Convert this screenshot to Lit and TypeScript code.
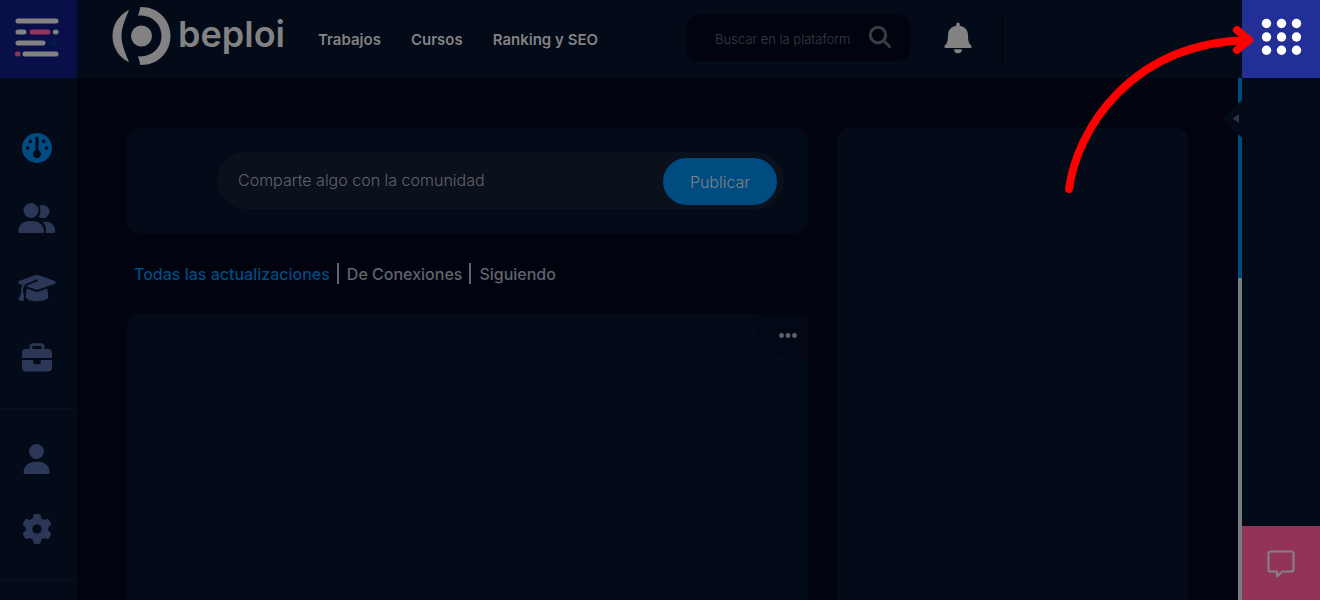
import { LitElement, html, css, svg } from "lit";
import { customElement, state } from "lit/decorators.js";

const icon = (w: number, h: number, box: string, body: unknown) => html`
  <svg width=${w} height=${h} viewBox=${box} fill="currentColor" aria-hidden="true">${body}</svg>`;

const gauge = icon(30, 30, "0 0 30 30", svg`
  <path fill-rule="evenodd" d="M15 0a15 15 0 1 0 0 30a15 15 0 0 0 0-30zM13.6 5.2a1.4 1.4 0 0 1 2.8 0V17.3a4 4 0 1 1-2.8 0zM8.3 6.6a1.8 1.8 0 1 1 0 3.6a1.8 1.8 0 0 1 0-3.6zM21.7 6.6a1.8 1.8 0 1 1 0 3.6a1.8 1.8 0 0 1 0-3.6zM5.6 13.2a1.8 1.8 0 1 1 0 3.6a1.8 1.8 0 0 1 0-3.6zM24.4 13.2a1.8 1.8 0 1 1 0 3.6a1.8 1.8 0 0 1 0-3.6z"/>`);

const people = icon(38, 30, "0 0 38 30", svg`
  <circle cx="13" cy="7.5" r="7.5"/>
  <path d="M0.3 28.5C0.3 22 5.5 18 11.3 18h3.4c5.800 0 11.300 4 11.300 10.500q0 1.500-1.500 1.500H1.800q-1.500 0-1.500-1.500z"/>
  <path d="M21.300 3.100a6.600 6.600 0 1 1-.5 10.800c2-3.300 2.200-7.300.5-10.800z"/>
  <path d="M24.200 18.800h4.500c4.800 0 8.500 4.200 8.500 9.700q0 1.500-1.500 1.500h-7.900c1-4.500-.5-8.700-3.600-11.200z"/>`);

const cap = icon(38, 30, "0 0 640 512", svg`
  <path d="M320 32c-8.1 0-16.1 1.4-23.7 4.1L15.800 137.400C6.300 140.900 0 149.900 0 160s6.300 19.100 15.800 22.600l57.900 20.900C57.300 229.300 48 259.800 48 291.900v28.100c0 28.400-10.800 57.700-22.300 80.800c-6.500 13-13.900 25.800-22.500 37.600C0 442.700-.9 448.300 .9 453.400s6 8.900 11.200 10.200l64 16c4.200 1.100 8.700 .3 12.400-2s6.300-6.100 7.100-10.400c8.600-42.800 4.300-81.200-2.100-108.700C90.300 344.300 86 329.800 80 316.500V291.900c0-30.200 10.200-58.700 27.900-81.500c12.900-15.500 29.600-28 49.200-35.700l157-61.700c8.200-3.200 17.500 .8 20.700 9s-.8 17.500-9 20.700l-157 61.700c-12.400 4.900-23.300 12.400-32.200 21.600l159.600 57.600c7.600 2.700 15.600 4.100 23.700 4.100s16.100-1.400 23.700-4.100L624.200 182.600c9.500-3.400 15.800-12.500 15.800-22.600s-6.300-19.100-15.800-22.600L343.700 36.100C336.100 33.400 328.100 32 320 32zM128 408c0 35.300 86 72 192 72s192-36.700 192-72L496.700 262.600 354.500 314c-11.100 4-22.800 6-34.500 6s-23.500-2-34.500-6L143.300 262.600 128 408z"/>`);

const briefcase = icon(30, 30, "0 1 30 30", svg`
  <path fill-rule="evenodd" d="M7.500 7V4.500A3.300 3.300 0 0 1 10.800 1.200h8.400a3.300 3.300 0 0 1 3.300 3.300V7H26a4 4 0 0 1 4 4v5H0v-5a4 4 0 0 1 4-4zM10.300 7h9.400V4.600a.6.6 0 0 0-.6-.6h-8.200a.6.6 0 0 0-.6.600z"/>
  <path d="M0 18h11.200v2.200a2 2 0 0 0 2 2h3.600a2 2 0 0 0 2-2V18H30v7.500a4 4 0 0 1-4 4H4a4 4 0 0 1-4-4z"/>`);

const person = icon(28, 30, "0 0 28 30", svg`
  <circle cx="13.500" cy="7.500" r="7.500"/>
  <path d="M.5 28.500C.5 22 6 17.800 12 17.800h3.500c6 0 11.200 4.200 11.200 10.700q0 1.500-1.500 1.500H2q-1.500 0-1.500-1.500z"/>`);

const gear = icon(30, 30, "0 0 512 512", svg`
  <path d="M495.900 166.600c3.200 8.700 .5 18.400-6.400 24.600l-43.300 39.400c1.100 8.300 1.700 16.800 1.700 25.400s-.6 17.100-1.700 25.400l43.300 39.400c6.900 6.200 9.600 15.900 6.400 24.600c-4.400 11.900-9.700 23.300-15.800 34.300l-4.700 8.100c-6.600 11-14 21.400-22.100 31.200c-5.900 7.200-15.700 9.600-24.500 6.800l-55.700-17.700c-13.400 10.300-28.200 18.900-44 25.400l-12.500 57.100c-2 9.100-9 16.300-18.200 17.800c-13.800 2.300-28 3.500-42.500 3.500s-28.700-1.200-42.500-3.500c-9.200-1.500-16.200-8.700-18.200-17.800l-12.500-57.100c-15.800-6.500-30.600-15.100-44-25.400L83.100 425.900c-8.800 2.800-18.600 .3-24.500-6.800c-8.100-9.800-15.500-20.200-22.100-31.200l-4.700-8.100c-6.100-11-11.400-22.400-15.800-34.300c-3.200-8.700-.5-18.400 6.400-24.600l43.300-39.400C64.600 273.100 64 264.600 64 256s.6-17.100 1.700-25.400L22.400 191.200c-6.900-6.200-9.600-15.900-6.400-24.600c4.400-11.900 9.700-23.300 15.800-34.300l4.700-8.100c6.600-11 14-21.400 22.100-31.200c5.900-7.200 15.700-9.600 24.500-6.800l55.700 17.700c13.400-10.300 28.200-18.900 44-25.400l12.500-57.100c2-9.100 9-16.300 18.200-17.800C227.300 1.200 241.500 0 256 0s28.700 1.200 42.500 3.500c9.200 1.500 16.200 8.700 18.200 17.800l12.500 57.100c15.800 6.500 30.600 15.100 44 25.400l55.700-17.700c8.800-2.800 18.600-.3 24.500 6.800c8.100 9.800 15.500 20.200 22.100 31.200l4.700 8.100c6.100 11 11.400 22.400 15.800 34.300zM256 336a80 80 0 1 0 0-160 80 80 0 1 0 0 160z"/>`);

@customElement("app-root")
export class AppRoot extends LitElement {
  @state() private tab = 0;

  static styles = css`
    :host {
      display: block;
      font-family: Inter, "Liberation Sans", sans-serif;
      --panel: #030a18;
      --ground: #01030f;
      --text: #828282;
      --blue: #004b80;
      --muted: #2c3757;
      color: var(--text);
    }
    * { box-sizing: border-box; }
    svg { display: block; flex: none; }
    a { color: inherit; text-decoration: none; }
    button { border: 0; padding: 0; margin: 0; background: none; color: inherit; font: inherit; cursor: pointer; }
    .shell {
      display: grid;
      grid-template-columns: 77px minmax(0, 1fr) 78px;
      height: 100vh;
      overflow: hidden;
      background: var(--ground);
      position: relative;
    }
    .side, .rail { background: var(--panel); display: flex; flex-direction: column; min-height: 0; }
    .toggle { height: 78px; flex: none; background: #091049; display: grid; place-items: center; padding: 0 3px 3px 0; }
    .group { display: flex; flex-direction: column; flex: none; padding: 15px 0; border-bottom: 1px solid #09101f; }
    .group.first { padding-top: 35px; }
    .group a { height: 70px; display: grid; place-items: center; padding-right: 4px; color: var(--muted); }
    .group a.on { color: var(--blue); }
    .center { display: flex; flex-direction: column; min-width: 0; min-height: 0; }
    .top {
      height: 78px; flex: none; background: var(--panel);
      display: grid; align-items: center; padding: 0 0 2px 35px;
      grid-template-columns: 206px 368px 224px auto 1fr;
    }
    .brand { display: flex; align-items: center; gap: 7px; height: 76px; padding-bottom: 4px; }
    .word { font-size: 36px; line-height: 40px; font-weight: 600; padding-bottom: 4px; }
    .links { display: flex; gap: 30px; font-size: 15px; line-height: 20px; font-weight: 600; padding-top: 4px; white-space: nowrap; }
    .search { display: flex; align-items: center; height: 46px; border-radius: 12px; background: var(--ground); padding: 0 18px 0 29px; }
    .search input {
      flex: 1; min-width: 0; border: 0; padding: 2px 0 0; background: none; outline: 0;
      color: #393c42; font: 300 13px/20px Inter, sans-serif;
    }
    .search input::placeholder { color: #393c42; opacity: 1; }
    .search button { color: #393c42; padding-bottom: 2px; }
    .alerts { height: 50px; padding: 0 30px 0 34px; border-right: 1px solid #000107; display: grid; place-items: center; }
    .stage { flex: 1; min-height: 0; display: grid; grid-template-columns: minmax(0, 1fr) 4px; }
    .page { padding: 50px 50px 0; display: grid; grid-template-columns: minmax(0, 1fr) 351px; gap: 29px; min-height: 0; }
    .feed { display: flex; flex-direction: column; min-width: 0; min-height: 0; }
    .card { background: var(--panel); border-radius: 12px; }
    .open { border-radius: 12px 12px 0 0; }
    .composer { padding: 24px 24px 24px 90px; }
    .pill {
      display: flex; align-items: flex-end; height: 57px; border-radius: 29px;
      background: #0a101c; border: 1px solid #0c121d; padding: 0 6px 3px 20px;
    }
    .pill input {
      flex: 1; min-width: 0; height: 47px; border: 0; padding: 0 0 4px; outline: 0; background: none;
      color: #60646d; font: 300 16px/24px Inter, sans-serif;
    }
    .pill input::placeholder { color: #60646d; opacity: 1; }
    .send { width: 114px; height: 47px; border-radius: 24px; background: var(--blue); font-size: 16px; font-weight: 300; }
    .tabs { display: flex; align-items: center; height: 81px; flex: none; padding-left: 7px; color: #60646d; }
    .tabs button { font-size: 16px; line-height: 19px; padding-top: 2px; font-weight: 500; white-space: nowrap; }
    .tabs button + button { border-left: 2px solid #60646d; margin-left: 7px; padding-left: 8px; }
    .tabs .on { color: var(--blue); }
    .post { flex: 1; min-height: 0; display: flex; justify-content: flex-end; align-items: flex-start; border-radius: 12px 0 0 0; }
    .more {
      width: 55px; height: 47px; border-radius: 0 0 0 47px; background: #020815;
      color: #60646d; display: flex; justify-content: flex-end; padding: 18px 10px 0 0;
    }
    .track { background: #777d7e; }
    .thumb { height: 200px; background: var(--blue); }
    .rail { position: relative; }
    .apps { height: 78px; flex: none; background: #212f96; color: #fff; display: grid; place-items: center; }
    .nub { position: absolute; top: 100px; left: -20px; color: #2f3440; }
    .chat { height: 74px; margin-top: auto; background: #92335a; display: grid; place-items: center; padding-top: 2px; color: #828282; }
    .pointer { position: absolute; top: 0; right: 60px; pointer-events: none; }
  `;

  render() {
    const tabs = ["Todas las actualizaciones", "De Conexiones", "Siguiendo"];
    const main: [string, unknown][] = [["Inicio", gauge], ["Comunidad", people], ["Cursos", cap], ["Trabajos", briefcase]];
    const own: [string, unknown][] = [["Perfil", person], ["Ajustes", gear]];
    return html`
      <div class="shell">
        <aside class="side">
          <button class="toggle" aria-label="Menú">
            <svg width="44" height="40" viewBox="0 0 44 40" fill="none" stroke="#828282" stroke-width="5" stroke-linecap="round">
              <path d="M3 3H41M3 14H9M40.500 14H41M3 25H28M10 36H41"/>
              <path stroke="#92335a" d="M17 14H33M2.500 36H3"/>
              <path stroke="#031b47" d="M37 25H40"/>
            </svg>
          </button>
          <nav class="group first">
            ${main.map(([name, glyph], i) => html`<a href="#" class=${i === 0 ? "on" : ""} aria-label=${name}>${glyph}</a>`)}
          </nav>
          <nav class="group">
            ${own.map(([name, glyph]) => html`<a href="#" aria-label=${name}>${glyph}</a>`)}
          </nav>
        </aside>

        <div class="center">
          <header class="top">
            <a class="brand" href="#">
              <svg width="59" height="60" viewBox="0 0 59 60" fill="#828282">
                <circle cx="29.500" cy="30" r="10.500"/>
                <path d="M17 4C7 9 .5 18.500.5 30S7 51.500 17 56.300C13.500 47 9.500 39 9.500 30S13.500 13 17 4z"/>
                <path d="M28.500 1C45 .5 58.500 13 58.500 30S45 59.500 28.500 59L26 50.300C39 51.500 49.500 42.500 49.500 30S39 8.500 26 9.700z"/>
              </svg>
              <span class="word">beploi</span>
            </a>
            <nav class="links"><a href="#">Trabajos</a><a href="#">Cursos</a><a href="#">Ranking y SEO</a></nav>
            <form class="search" role="search">
              <input type="search" aria-label="Buscar" placeholder="Buscar en la plataform">
              <button type="button" aria-label="Buscar">
                <svg width="24" height="24" viewBox="0 0 24 24" fill="none" stroke="currentColor" stroke-width="3">
                  <circle cx="10" cy="10" r="7.700"/><path d="M15.500 15.500l6 6" stroke-linecap="round"/>
                </svg>
              </button>
            </form>
            <div class="alerts">
              <button aria-label="Notificaciones">
                <svg width="28" height="32" viewBox="0 0 28 32" fill="#828282">
                  <path d="M14 .5q1.800 0 1.800 2v1.200C21 4.500 24 8.500 24 13c0 6 .7 8 3.200 10.500.8 1 .5 2.500-1 2.500H1.800C.3 26 0 24.500.8 23.500 3.300 21 4 19 4 13c0-4.500 3-8.500 8.200-9.300V2.500q0-2 1.800-2zM10 27.300h8a4 4 0 0 1-8 0z"/>
                </svg>
              </button>
            </div>
          </header>

          <div class="stage">
            <main class="page">
              <section class="feed">
                <form class="card composer">
                  <div class="pill">
                    <input type="text" aria-label="Comparte algo con la comunidad" placeholder="Comparte algo con la comunidad">
                    <button type="button" class="send">Publicar</button>
                  </div>
                </form>
                <div class="tabs">
                  ${tabs.map((name, i) => html`<button class=${this.tab === i ? "on" : ""} @click=${() => (this.tab = i)}>${name}</button>`)}
                </div>
                <article class="card post">
                  <button class="more" aria-label="Más opciones">
                    ${icon(20, 6, "0 0 20 6", svg`<circle cx="3.500" cy="3.500" r="2.400"/><circle cx="10" cy="3.500" r="2.400"/><circle cx="16.500" cy="3.500" r="2.400"/>`)}
                  </button>
                </article>
              </section>
              <aside class="card open"></aside>
            </main>
            <div class="track"><div class="thumb"></div></div>
          </div>
        </div>

        <aside class="rail">
          <button class="apps" aria-label="Aplicaciones">
            ${icon(42, 42, "0 0 42 42", [6.5, 21.5, 36.5].map((x) => [5.5, 19, 32.3].map((y) => svg`<circle cx=${x} cy=${y} r="4.700"/>`)))}
          </button>
          <button class="nub" aria-label="Abrir panel">
            <svg width="20" height="38" viewBox="0 0 20 38">
              <path fill="#030a18" d="M20 0V38L4 23Q0 19 4 15z"/><path fill="currentColor" d="M17 14v9l-6.500-4.500z"/>
            </svg>
          </button>
          <button class="chat" aria-label="Chat">
            <svg width="28" height="28" viewBox="0 0 28 28" fill="none" stroke="currentColor" stroke-width="2.200" stroke-linejoin="round">
              <path d="M3.500 1.500h21a2 2 0 0 1 2 2v16a2 2 0 0 1-2 2H15.500L10 26.500V21.500H3.500a2 2 0 0 1-2-2v-16a2 2 0 0 1 2-2z"/>
            </svg>
          </button>
        </aside>

        <svg class="pointer" width="200" height="200" viewBox="1060 0 200 200" fill="none" stroke="#f00" stroke-width="8" stroke-linecap="round" stroke-linejoin="round" aria-hidden="true">
          <path d="M1069 189C1077 130 1130 43 1249 40M1237 30L1249 40L1237 50"/>
        </svg>
      </div>`;
  }
}
